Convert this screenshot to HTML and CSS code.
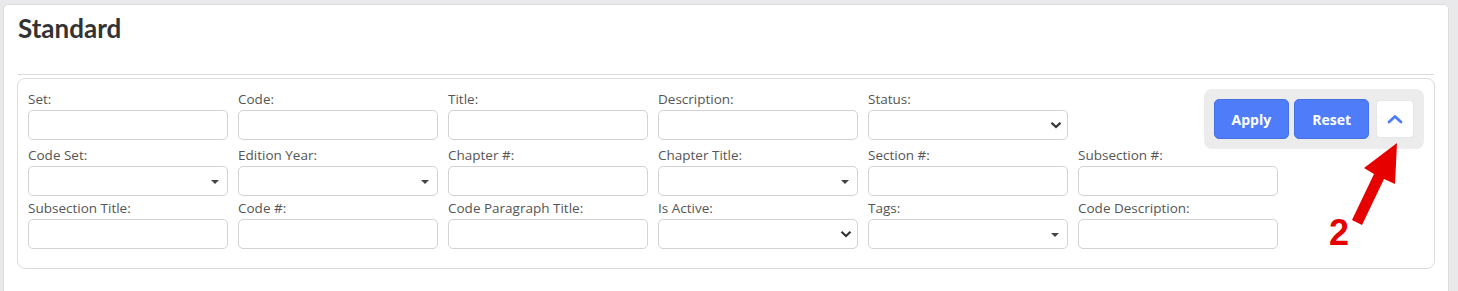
FILE: index.html
```html
<!DOCTYPE html>
<html>

<head>
    <title>Standard</title>
    <link rel="stylesheet" href="styles.css">
</head>

<body>
    <div class="card">
        <div class="card-header">
            <h2 class="card-title">Standard</h2>
        </div>
        <hr class="divider">
        <form class="filter-panel">
            <div class="filter-row row-first">
                <div class="field">
                    <label>Set:</label>
                    <input type="text" class="input">
                </div>
                <div class="field">
                    <label>Code:</label>
                    <input type="text" class="input">
                </div>
                <div class="field">
                    <label>Title:</label>
                    <input type="text" class="input">
                </div>
                <div class="field">
                    <label>Description:</label>
                    <input type="text" class="input">
                </div>
                <div class="field">
                    <label>Status:</label>
                    <select class="input native-select"></select>
                </div>
                <div class="toolbar">
                    <button type="button" class="btn btn-primary">Apply</button>
                    <button type="button" class="btn btn-primary">Reset</button>
                    <button type="button" class="btn btn-collapse">
                        <svg width="16" height="10" viewBox="0 0 16 10">
                            <path d="M2 8 L8 2.5 L14 8" fill="none" stroke="#4f7df9" stroke-width="2.8"
                                stroke-linecap="round" stroke-linejoin="round" />
                        </svg>
                    </button>
                </div>
            </div>
            <div class="filter-row">
                <div class="field">
                    <label>Code Set:</label>
                    <div class="input select-box"><span class="caret"></span></div>
                </div>
                <div class="field">
                    <label>Edition Year:</label>
                    <div class="input select-box"><span class="caret"></span></div>
                </div>
                <div class="field">
                    <label>Chapter #:</label>
                    <input type="text" class="input">
                </div>
                <div class="field">
                    <label>Chapter Title:</label>
                    <div class="input select-box"><span class="caret"></span></div>
                </div>
                <div class="field">
                    <label>Section #:</label>
                    <input type="text" class="input">
                </div>
                <div class="field">
                    <label>Subsection #:</label>
                    <input type="text" class="input">
                </div>
            </div>
            <div class="filter-row">
                <div class="field">
                    <label>Subsection Title:</label>
                    <input type="text" class="input">
                </div>
                <div class="field">
                    <label>Code #:</label>
                    <input type="text" class="input">
                </div>
                <div class="field">
                    <label>Code Paragraph Title:</label>
                    <input type="text" class="input">
                </div>
                <div class="field">
                    <label>Is Active:</label>
                    <select class="input native-select"></select>
                </div>
                <div class="field">
                    <label>Tags:</label>
                    <div class="input select-box"><span class="caret"></span></div>
                </div>
                <div class="field">
                    <label>Code Description:</label>
                    <input type="text" class="input">
                </div>
            </div>

            <!-- annotation -->
            <svg class="note-arrow" width="90" height="110" viewBox="1320 140 90 110">
                <polygon fill="#e60000"
                    points="1397,143 1395,184 1384,179 1362,225 1352,220 1374,174 1364,168" />
            </svg>
            <span class="note-number">2</span>
        </form>
    </div>
</body>

</html>
```

FILE: styles.css
```css
body {
    margin: 0;
    padding: 4px 9px 0 3px;
    background: #e9e9ec;
    font-family: "Open Sans", "Liberation Sans", sans-serif;
    height: 291px;
    box-sizing: border-box;
    overflow: hidden;
}

.card {
    background: #fff;
    border: 1px solid #dcdcdc;
    border-radius: 5px;
    height: 320px;
}

.card-header {
    padding: 8px 14px 31px 14px;
}

.card-title {
    margin: 0;
    font-family: Lato, "Open Sans", sans-serif;
    font-weight: 700;
    font-size: 26px;
    line-height: 30px;
    color: #333;
}

.divider {
    margin: 0 14px;
    border: none;
    border-top: 1px solid #d9d9d9;
}

.filter-panel {
    position: relative;
    margin: 3px 13px 0 13px;
    padding: 10px 10px 19px 10px;
    border: 1px solid #dcdcdc;
    border-radius: 8px;
}

.filter-row {
    display: flex;
    align-items: flex-start;
    gap: 10px;
    margin-bottom: 3px;
}

.filter-row:last-of-type {
    margin-bottom: 0;
}

.row-first .field {
    margin-top: 1px;
}

.field {
    width: 200px;
}

.field label {
    display: block;
    font-size: 13.5px;
    line-height: 19px;
    margin-bottom: 1px;
    color: #555;
}

.input {
    display: block;
    width: 200px;
    height: 30px;
    box-sizing: border-box;
    border: 1px solid #d3d3d3;
    border-radius: 5px;
    background: #fff;
    padding: 4px 8px;
    font-family: inherit;
    font-size: 13.5px;
    margin: 0;
}

.native-select {
    appearance: none;
    -webkit-appearance: none;
    background-image: url("data:image/svg+xml,%3Csvg xmlns='http://www.w3.org/2000/svg' width='12' height='8' viewBox='0 0 12 8'%3E%3Cpath d='M1.5 1.8 L6 6 L10.5 1.8' fill='none' stroke='%23333' stroke-width='2.2'/%3E%3C/svg%3E");
    background-repeat: no-repeat;
    background-position: right 5px center;
}

.select-box {
    display: flex;
    align-items: center;
    justify-content: flex-end;
    padding-right: 8px;
}

.caret {
    width: 0;
    height: 0;
    border-left: 4px solid transparent;
    border-right: 4px solid transparent;
    border-top: 4px solid #444;
    margin-top: 1px;
}

.toolbar {
    display: flex;
    align-items: center;
    margin-left: auto;
    margin-bottom: -6px;
    padding: 10px;
    height: 60px;
    box-sizing: border-box;
    background: #ececec;
    border-radius: 8px;
}

.btn {
    font-family: "Open Sans", "Liberation Sans", sans-serif;
    font-weight: 700;
    font-size: 14px;
    cursor: pointer;
    margin: 0;
}

.btn-primary {
    height: 40px;
    padding: 0 17px;
    margin-right: 5px;
    color: #fff;
    background: #4f7df9;
    border: 1px solid #4472e6;
    border-radius: 5px;
}

.btn-primary + .btn-primary {
    margin-right: 7px;
}

.btn-collapse {
    width: 38px;
    height: 38px;
    padding: 0;
    display: flex;
    align-items: center;
    justify-content: center;
    background: #fff;
    border: 1px solid #e6e6e6;
    border-radius: 4px;
}

.note-arrow {
    position: absolute;
    left: 1302px;
    top: 61px;
}

.note-number {
    position: absolute;
    left: 1311px;
    top: 136px;
    font-family: "Liberation Sans", Arial, sans-serif;
    font-weight: 700;
    font-size: 36px;
    line-height: 36px;
    color: #e60000;
}
```
